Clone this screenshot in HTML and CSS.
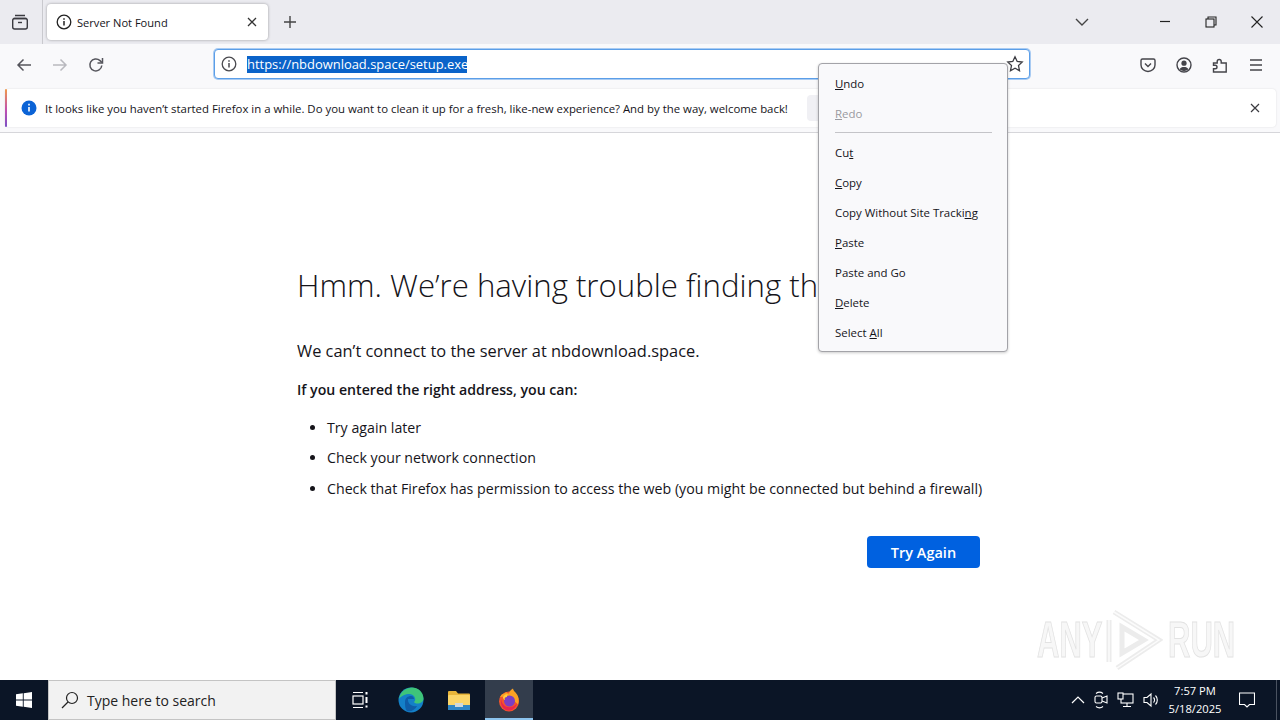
FILE: index.html
```html
<!DOCTYPE html>
<html>

<head>
    <meta charset="utf-8">
    <title>Server Not Found</title>
    <link rel="stylesheet" href="styles.css">
</head>

<body>
    <!-- Tab strip -->
    <div class="tabstrip">
        <div class="tab-manager">
            <svg width="20" height="20" viewBox="0 0 20 20" fill="none" stroke="#3a3a40" stroke-width="1.4"><path d="M5 3.500h10M3.500 6.500h13" /><rect x="2.700" y="6.500" width="14.600" height="10.500" rx="2" /><path d="M8 10.500h4" /></svg>
        </div>
        <div class="tab">
            <svg class="tab-icon" width="16" height="16" viewBox="0 0 16 16" fill="none" stroke="#222" stroke-width="1.3"><circle cx="8" cy="8" r="6.800" /><path d="M8 7v4.600" stroke-width="1.500" /><path d="M8 4.200v1.600" stroke-width="1.500" /></svg>
            <span class="tab-title">Server Not Found</span>
            <svg width="12" height="12" viewBox="0 0 12 12" stroke="#333" stroke-width="1.300"><path d="M2 2l8 8M10 2l-8 8" /></svg>
        </div>
        <div class="new-tab">
            <svg width="14" height="14" viewBox="0 0 14 14" stroke="#444" stroke-width="1.400"><path d="M7 1v12M1 7h12" /></svg>
        </div>
        <div class="spacer"></div>
        <svg class="tab-list" width="14" height="10" viewBox="0 0 14 10" fill="none" stroke="#444" stroke-width="1.400"><path d="M1 2l6 6 6-6" /></svg>
        <div class="win-btn">
            <svg width="12" height="12" viewBox="0 0 12 12" stroke="#222" stroke-width="1.200"><path d="M1 5.500h10" /></svg>
        </div>
        <div class="win-btn">
            <svg width="12" height="12" viewBox="0 0 12 12" fill="none" stroke="#222" stroke-width="1.100"><rect x="1" y="3" width="8" height="8" /><path d="M3 3V1h8v8H9" /></svg>
        </div>
        <div class="win-btn">
            <svg width="12" height="12" viewBox="0 0 12 12" stroke="#222" stroke-width="1.100"><path d="M0.500 0.500l11 11M11.500 0.500l-11 11" /></svg>
        </div>
    </div>

    <!-- Navigation bar -->
    <div class="navbar">
        <div class="nav-left">
            <svg width="16" height="14" viewBox="0 0 16 14" fill="none" stroke="#55555c" stroke-width="1.500"><path d="M15 7H2M7.500 1.500L2 7l5.500 5.500" /></svg>
            <svg width="16" height="14" viewBox="0 0 16 14" fill="none" stroke="#b9b9bf" stroke-width="1.500"><path d="M1 7h13M8.500 1.500L14 7l-5.500 5.500" /></svg>
            <svg width="16" height="16" viewBox="0 0 16 16" fill="none" stroke="#55555c" stroke-width="1.500"><path d="M13.800 8.500A6 6 0 1 1 12 3.600L14 5.500" /><path d="M14.500 1v5h-5" /></svg>
        </div>
        <div class="urlbar">
            <svg width="16" height="16" viewBox="0 0 16 16" fill="none" stroke="#4a4a4f" stroke-width="1.300"><circle cx="8" cy="8" r="6.800" /><path d="M8 7v4.600M8 4.200v1.600" stroke-width="1.500" /></svg>
            <span class="url-text">https://nbdownload.space/setup.exe</span>
            <div class="spacer"></div>
            <svg width="18" height="18" viewBox="0 0 18 18" fill="none" stroke="#3c3c42" stroke-width="1.300"><path d="M9 1.800l2.200 4.700 5 .6-3.700 3.500 1 5.100L9 13.200l-4.500 2.500 1-5.100L1.800 7.100l5-.6z" /></svg>
        </div>
        <div class="nav-right">
            <svg width="16" height="16" viewBox="0 0 16 16" fill="none" stroke="#44444a" stroke-width="1.400"><path d="M2.500 2h11A1.500 1.500 0 0 1 15 3.500V8A7 6.500 0 0 1 1 8V3.500A1.500 1.500 0 0 1 2.500 2z" /><path d="M5 6.500l3 3 3-3" /></svg>
            <svg width="16" height="16" viewBox="0 0 16 16" fill="none" stroke="#44444a" stroke-width="1.400"><circle cx="8" cy="8" r="7" /><circle cx="8" cy="6.200" r="2.600" fill="#44444a" stroke="none" /><path d="M3.500 12.300c1-1.800 2.500-2.300 4.500-2.300s3.500.5 4.500 2.300A6 6 0 0 1 8 14a6 6 0 0 1-4.500-1.700z" fill="#44444a" stroke="none" /></svg>
            <svg width="16" height="16" viewBox="0 0 16 16" fill="none" stroke="#44444a" stroke-width="1.400"><path d="M1.500 5.500h3.700V4a2 2 0 0 1 4 0v1.500h5v9H1.500v-3.200h1.700a1.800 1.800 0 0 0 0-3.600H1.500z" transform="translate(0 .5)" /></svg>
            <svg width="16" height="14" viewBox="0 0 16 14" stroke="#44444a" stroke-width="1.400"><path d="M2 2h12M2 7h12M2 12h12" /></svg>
        </div>
    </div>

    <!-- Notification bar -->
    <div class="notice-wrap">
        <div class="notice">
            <div class="notice-accent"></div>
            <svg class="notice-icon" width="16" height="16" viewBox="0 0 16 16"><circle cx="8" cy="8" r="7.500" fill="#0b63d6" /><path d="M8 7v4.500M8 3.800v1.700" stroke="#fff" stroke-width="1.600" /></svg>
            <span class="notice-text">It looks like you haven’t started Firefox in a while. Do you want to clean it up for a fresh, like-new experience? And by the way, welcome back!</span>
            <div class="notice-btn"></div>
            <div class="spacer"></div>
            <svg width="10" height="10" viewBox="0 0 10 10" stroke="#3a3a40" stroke-width="1.200"><path d="M1 1l8 8M9 1L1 9" /></svg>
        </div>
    </div>

    <!-- Error page -->
    <div class="page">
        <div class="error-box">
            <h1>Hmm. We’re having trouble finding th</h1>
            <p class="lead">We can’t connect to the server at nbdownload.space.</p>
            <p class="sub">If you entered the right address, you can:</p>
            <ul>
                <li>Try again later</li>
                <li>Check your network connection</li>
                <li>Check that Firefox has permission to access the web (you might be connected but behind a firewall)</li>
            </ul>
            <div class="actions">
                <button class="try-again">Try Again</button>
            </div>
        </div>
    </div>

    <!-- Taskbar -->
    <div class="taskbar">
        <div class="start">
            <svg width="16" height="16" viewBox="0 0 16 16" fill="#fff"><path d="M0 2.300l6.800-1v6.300H0zM7.700 1.200L16 0v7.600H7.700zM0 8.400h6.800v6.300l-6.800-1zM7.700 8.400H16V16l-8.300-1.200z" /></svg>
        </div>
        <div class="search">
            <svg width="20" height="20" viewBox="0 0 20 20" fill="none" stroke="#222" stroke-width="1.200"><circle cx="12" cy="8" r="5.500" /><path d="M8 12l-6 6" /></svg>
            <span>Type here to search</span>
        </div>
        <div class="task-item">
            <svg width="18" height="18" viewBox="0 0 18 18" fill="none" stroke="#fff" stroke-width="1.200"><path d="M1 1.500h10M1 16.500h10" /><rect x="1" y="5" width="10" height="8" /><path d="M14.500 1v2.500M14.500 6v6M14.500 14.500v2" stroke-width="2" /></svg>
        </div>
        <div class="task-item edge">
            <svg width="26" height="26" viewBox="0 0 26 26"><circle cx="13" cy="13" r="12.500" fill="#1480c8" /><path d="M1 12C2 4 9 .5 14 .5c6 0 11.500 4.500 11.500 11 0 3.500-3 5-6 5-2 0-3.500-.7-3.500-1.500 1-1 1.500-2 1-4C16 8 13 6.500 10 7c-4 .7-8 3-9 5z" fill="#3ec47a" /><path d="M7 15c0-4 3-6 6-6 2 0 3 1.500 3 3H10c-.5 4 3 8 9 7-2 4-6 6-10 5-2-2-2-6-2-9z" fill="#0f5da8" /></svg>
        </div>
        <div class="task-item">
            <svg width="22" height="20" viewBox="0 0 22 20"><path d="M0 2a1 1 0 0 1 1-1h7l2 2.500h11a1 1 0 0 1 1 1V6H0z" fill="#e8b53a" /><rect x="0" y="5" width="22" height="15" rx="1" fill="#fbd568" /><rect x="0" y="15" width="22" height="5" fill="#2f86c6" /><rect x="7" y="13" width="8" height="4" fill="#cfd8dc" /></svg>
        </div>
        <div class="task-item active">
            <svg width="24" height="24" viewBox="0 0 24 24"><circle cx="12" cy="13.500" r="10" fill="#f4552b" /><path d="M3 9C5 5 8 6 9 4c1 1 2 1.500 3 1.500 0-2 2-4 4-5 0 2 2 3 4 6 2 3 2 7 1 10L12 8z" fill="#fba224" /><circle cx="12.500" cy="13" r="5.500" fill="#7b3fc4" /><path d="M4 11c1 6 5 9 10 8 3-.5 5-2 6-4-1 5-5 8-9 7.500C6 22 3 17 4 11z" fill="#e8264f" /><path d="M6 9c1-2 3-3 5-3-1 1-1 2-1 3-2 0-3 1-2 3-1 0-2-1-2-3z" fill="#ffcf3f" /></svg>
        </div>
        <div class="spacer"></div>
        <div class="tray">
            <svg width="14" height="8" viewBox="0 0 14 8" fill="none" stroke="#fff" stroke-width="1.200"><path d="M1 7l6-6 6 6" /></svg>
            <svg width="14" height="18" viewBox="0 0 14 18" fill="none" stroke="#fff" stroke-width="1.100"><rect x="1" y="5" width="7" height="7" rx="1.500" /><path d="M8 7l5-2v7l-5-2M2 2.500c2-1.500 5-1.500 7 0M2 15.500c2 1.500 5 1.500 7 0" /></svg>
            <svg width="17" height="16" viewBox="0 0 17 16" fill="none" stroke="#fff" stroke-width="1.100"><rect x="4" y="2" width="12" height="9" /><rect x="1" y="1" width="5" height="6" fill="#0b1526" /><path d="M10 11v3M6 14.500h8" /></svg>
            <svg width="17" height="16" viewBox="0 0 17 16" fill="none" stroke="#fff" stroke-width="1.100"><path d="M1 5.500h3L8 2v12L4 10.500H1z" /><path d="M10.500 5.500a3.500 3.500 0 0 1 0 5M12.500 3.500a6.500 6.500 0 0 1 0 9" /></svg>
        </div>
        <div class="clock">
            <span>7:57 PM</span>
            <span>5/18/2025</span>
        </div>
        <div class="notif">
            <svg width="16" height="16" viewBox="0 0 16 16" fill="none" stroke="#fff" stroke-width="1.100"><path d="M.5 1h15v11.500h-5L8 15l-2.500-2.500h-5z" /></svg>
        </div>
        <div class="show-desktop"></div>
    </div>

    <!-- Url bar context menu -->
    <div class="context-menu">
        <div class="menu-item"><u>U</u>ndo</div>
        <div class="menu-item disabled"><u>R</u>edo</div>
        <div class="menu-sep"></div>
        <div class="menu-item">Cu<u>t</u></div>
        <div class="menu-item"><u>C</u>opy</div>
        <div class="menu-item">Copy Without Site Tracki<u>n</u>g</div>
        <div class="menu-item"><u>P</u>aste</div>
        <div class="menu-item">Paste and Go</div>
        <div class="menu-item"><u>D</u>elete</div>
        <div class="menu-item">Select <u>A</u>ll</div>
    </div>

    <!-- Watermark -->
    <div class="watermark">
        <span class="mark-word">ANY</span>
        <svg class="mark-logo" width="58" height="64" viewBox="0 0 58 64" fill="none">
            <g stroke="#ececec" stroke-width="5"><path d="M4 12v42M9 4l45 28-42 28" /><path d="M17 19l22 13-22 13z" /></g>
            <g stroke="#fbfbfb" stroke-width="1.500"><path d="M4 12v42M9 4l45 28-42 28" /></g>
        </svg>
        <span class="mark-word">RUN</span>
    </div>
</body>

</html>
```

FILE: styles.css
```css
* {
    box-sizing: border-box;
    margin: 0;
    padding: 0;
}

html,
body {
    height: 720px;
    overflow: hidden;
}

body {
    background-color: #fff;
    color: #15141a;
    display: flex;
    flex-direction: column;
    font-family: "Open Sans", "Noto Sans", sans-serif;
    position: relative;
}

.spacer {
    flex: 1;
}

/* Tab strip */
.tabstrip {
    align-items: center;
    background-color: #ebebf0;
    display: flex;
    flex-shrink: 0;
    height: 44px;
}

.tab-manager {
    align-items: center;
    border-right: 1px solid #c9c9ce;
    display: flex;
    height: 44px;
    justify-content: center;
    padding-right: 2px;
    width: 43px;
}

.tab {
    align-items: center;
    background-color: #fff;
    border-radius: 4px;
    box-shadow: 0 0 3px rgba(0, 0, 0, 0.35);
    display: flex;
    height: 36px;
    margin-left: 4px;
    padding: 0 10px 0 9px;
    width: 221px;
}

.tab-title {
    flex: 1;
    font-size: 11.1px;
    margin-left: 5px;
}

.new-tab {
    align-items: center;
    display: flex;
    height: 36px;
    justify-content: center;
    margin-left: 4px;
    width: 36px;
}

.tab-list {
    margin-right: 53px;
}

.win-btn {
    align-items: center;
    display: flex;
    height: 44px;
    justify-content: center;
    width: 46px;
}

/* Nav bar */
.navbar {
    align-items: center;
    background-color: #f9f9fb;
    display: flex;
    flex-shrink: 0;
    height: 41px;
    position: relative;
}

.nav-left {
    align-items: center;
    display: flex;
    gap: 20px;
    margin-left: 16px;
    width: 198px;
}

.urlbar {
    align-items: center;
    background-color: #fff;
    border: 1px solid #5b9ee8;
    border-radius: 4px;
    box-shadow: 0 0 0 1px #a9cbf2;
    display: flex;
    height: 30px;
    margin-bottom: 2px;
    padding: 0 5px 0 6px;
    width: 816px;
}

.url-text {
    background-color: #0a63c9;
    color: #fff;
    font-size: 12.95px;
    line-height: 17px;
    margin-left: 10px;
    margin-top: 1px;
    white-space: nowrap;
    width: 220px;
}

.nav-right {
    align-items: center;
    display: flex;
    gap: 20px;
    margin-left: 110px;
}

/* Notification */
.notice-wrap {
    background-color: #f9f9fb;
    border-bottom: 1px solid #d6d6da;
    flex-shrink: 0;
    height: 48px;
    padding: 4px 4px 4px 5px;
}

.notice {
    align-items: center;
    background-color: #fff;
    border-radius: 4px;
    box-shadow: 0 0 2px rgba(0, 0, 0, 0.12);
    display: flex;
    height: 38px;
    padding-right: 16px;
}

.notice-accent {
    align-self: stretch;
    background: linear-gradient(#f09a4a, #c14fb0 55%, #7a4fc4);
    border-radius: 2px;
    width: 2px;
}

.notice-icon {
    flex-shrink: 0;
    margin-left: 14px;
}

.notice-text {
    font-size: 11.4px;
    margin-left: 8px;
    white-space: nowrap;
}

.notice-btn {
    background-color: #f0f0f4;
    border-radius: 4px;
    height: 26px;
    margin-left: 19px;
    width: 190px;
}

/* Error page */
.page {
    flex: 1;
    padding: 132px 0 0 297px;
}

.error-box {
    width: 683px;
}

h1 {
    font-size: 31.2px;
    font-weight: 300;
    line-height: 40px;
    white-space: nowrap;
}

.lead {
    font-size: 16.4px;
    line-height: 22px;
    margin-top: 35px;
}

.sub {
    font-size: 14.15px;
    font-weight: 600;
    line-height: 22px;
    margin-top: 17px;
}

ul {
    font-size: 14.2px;
    line-height: 20px;
    margin-top: 16.5px;
    padding-left: 30px;
}

li {
    margin-bottom: 10.5px;
    white-space: nowrap;
}

.actions {
    display: flex;
    justify-content: flex-end;
    margin-top: 37.5px;
}

.try-again {
    background-color: #0061e0;
    border: none;
    border-radius: 4px;
    color: #fff;
    font-family: inherit;
    font-size: 14.5px;
    font-weight: 600;
    height: 32px;
    width: 113px;
}

/* Taskbar */
.taskbar {
    align-items: center;
    background-color: #0b1526;
    color: #fff;
    display: flex;
    flex-shrink: 0;
    height: 40px;
}

.start {
    align-items: center;
    display: flex;
    height: 40px;
    justify-content: center;
    width: 48px;
}

.search {
    align-items: center;
    background-color: #f2f2f2;
    border: 1px solid #c4c4c4;
    color: #222;
    display: flex;
    font-size: 14px;
    gap: 7px;
    height: 40px;
    padding-left: 11px;
    width: 288px;
}

.task-item {
    align-items: center;
    display: flex;
    height: 40px;
    justify-content: center;
    width: 49px;
}

.task-item.edge {
    padding-left: 2px;
}

.task-item.active {
    background-color: #333d4c;
    border-bottom: 2px solid #8cc4ee;
    margin-left: 2px;
    padding-top: 2px;
    width: 48px;
}

.tray {
    align-items: center;
    display: flex;
    gap: 9px;
    margin-right: 3px;
}

.clock {
    align-items: center;
    display: flex;
    flex-direction: column;
    font-size: 11.2px;
    line-height: 18px;
    width: 64px;
}

.notif {
    align-items: center;
    display: flex;
    height: 40px;
    justify-content: center;
    width: 40px;
}

.show-desktop {
    border-left: 1px solid #4a5260;
    height: 40px;
    margin-left: 9px;
    width: 4px;
}

/* Context menu */
.context-menu {
    background-color: #f9f9fb;
    border: 1px solid #a3a3a8;
    border-radius: 4px;
    box-shadow: 0 1px 3px rgba(0, 0, 0, 0.2);
    left: 818px;
    padding: 5px 0 3px;
    position: absolute;
    top: 63px;
    width: 190px;
}

.menu-item {
    font-size: 11.45px;
    height: 30px;
    line-height: 30px;
    padding-left: 16px;
    white-space: nowrap;
}

.menu-item.disabled {
    color: #9a9a9f;
}

.menu-sep {
    border-top: 1px solid #c4c4c8;
    margin: 3px 15px 5px 16px;
}

/* Watermark */
.watermark {
    align-items: center;
    display: flex;
    gap: 5px;
    left: 1037px;
    position: absolute;
    top: 608px;
}

.mark-logo {
    filter: blur(0.5px);
}

.mark-word {
    color: #f7f7f7;
    display: inline-block;
    font-family: "Liberation Sans", sans-serif;
    font-size: 50px;
    font-weight: 700;
    line-height: 64px;
    transform: scaleX(0.62);
    transform-origin: left center;
    width: 63px;
    -webkit-text-stroke: 1px #e2e2e2;
}
```
